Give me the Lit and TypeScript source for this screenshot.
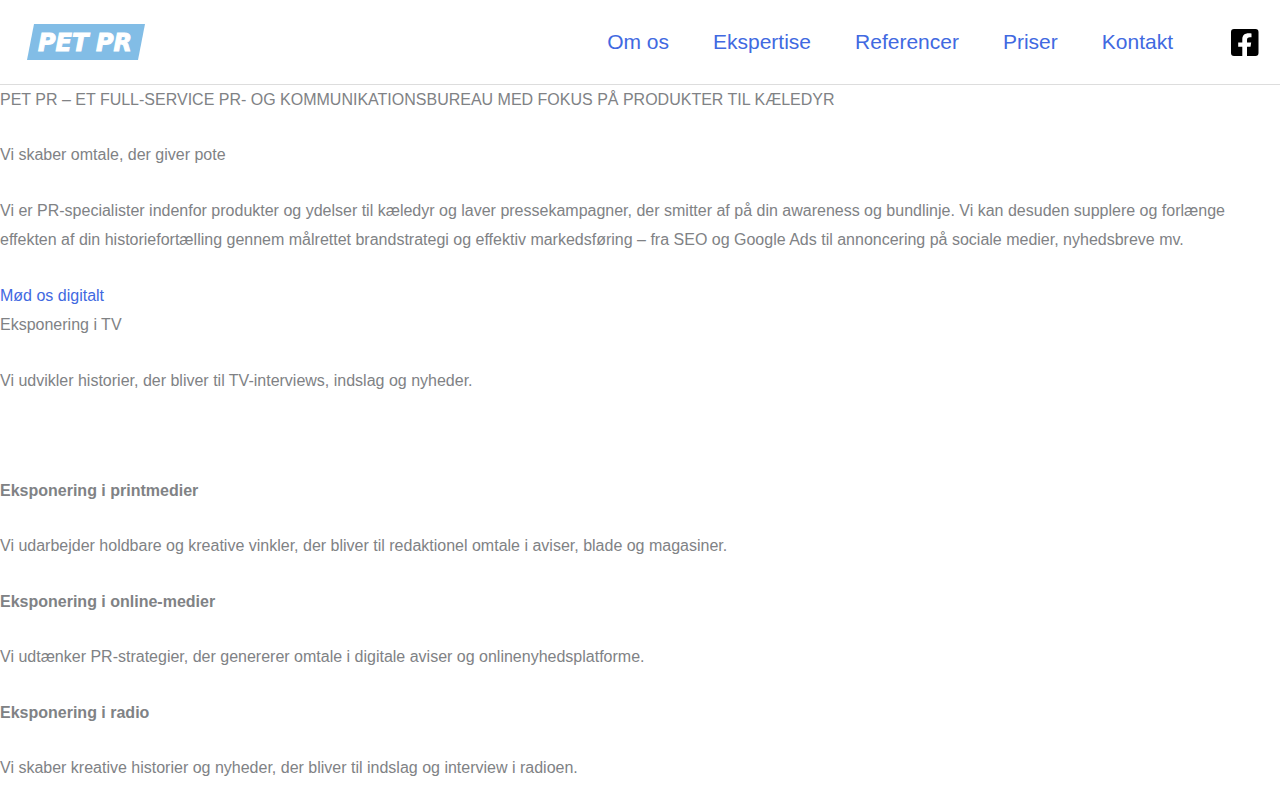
import { LitElement, html, css } from "lit";
import { customElement } from "lit/decorators.js";

const links = ["Om os", "Ekspertise", "Referencer", "Priser", "Kontakt"];

const media = [
  {
    title: "Eksponering i printmedier",
    text: "Vi udarbejder holdbare og kreative vinkler, der bliver til redaktionel omtale i aviser, blade og magasiner.",
  },
  {
    title: "Eksponering i online-medier",
    text: "Vi udtænker PR-strategier, der genererer omtale i digitale aviser og onlinenyhedsplatforme.",
  },
  {
    title: "Eksponering i radio",
    text: "Vi skaber kreative historier og nyheder, der bliver til indslag og interview i radioen.",
  },
];

@customElement("site-header")
export class SiteHeader extends LitElement {
  static styles = css`
    :host {
      display: block;
      border-bottom: 1px solid #dddddd;
    }
    .bar {
      display: flex;
      align-items: center;
      justify-content: space-between;
      min-height: 84px;
      padding: 0 20px;
    }
    .logo {
      display: block;
    }
    .logo svg,
    .social svg {
      display: block;
    }
    .word {
      font: italic bold 24px "DejaVu Sans", sans-serif;
      fill: #ffffff;
      stroke: #ffffff;
      stroke-width: 1;
    }
    .right {
      display: flex;
      align-items: center;
      gap: 57px;
    }
    .nav {
      display: flex;
      gap: 44px;
    }
    .nav a {
      color: #4169e1;
      font-size: 21px;
      line-height: 40px;
      text-decoration: none;
      white-space: nowrap;
    }
  `;

  render() {
    return html`
      <header class="bar">
        <a class="logo" href="#" aria-label="PET PR">
          <svg width="132" height="52" viewBox="0 0 132 52">
            <path d="M14 8H125L118 44H7Z" fill="#82bde6" />
            <text class="word" x="18" y="35">PET <tspan x="76">PR</tspan></text>
          </svg>
        </a>
        <div class="right">
          <nav class="nav">
            ${links.map((label) => html`<a href="#">${label}</a>`)}
          </nav>
          <a class="social" href="#" aria-label="Facebook">
            <svg width="30" height="30" viewBox="0 0 30 30">
              <path
                d="M4 2H25.500Q28.500 2 28.500 5V26Q28.500 29 25.500 29H17V19.700H20.500L21.200 15.500H17V13C17 11 17.800 10.200 20 10.200H21.500V6.500C20.800 6.300 19.700 6.200 18.700 6.200C14.700 6.200 12.300 8.200 12.300 12.200V15.500H8.200V19.700H12.300V29H4Q1 29 1 26V5Q1 2 4 2Z"
              />
            </svg>
          </a>
        </div>
      </header>
    `;
  }
}

@customElement("app-root")
export class AppRoot extends LitElement {
  static styles = css`
    :host {
      display: block;
      background: #ffffff;
      color: #808285;
      font-family: "Liberation Sans", Arial, sans-serif;
      font-size: 16px;
      line-height: 29px;
    }
    p {
      margin: 0 0 27px;
    }
    .heading {
      margin-bottom: 26px;
    }
    .intro a {
      color: #4169e1;
      text-decoration: none;
    }
    .media {
      padding-top: 54px;
    }
  `;

  render() {
    return html`
      <site-header></site-header>
      <main>
        <section class="intro">
          <p class="heading">PET PR – ET FULL-SERVICE PR- OG KOMMUNIKATIONSBUREAU MED FOKUS PÅ PRODUKTER TIL KÆLEDYR</p>
          <p>Vi skaber omtale, der giver pote</p>
          <p>
            Vi er PR-specialister indenfor produkter og ydelser til kæledyr og laver pressekampagner,
            der smitter af på din awareness og bundlinje. Vi kan desuden supplere og forlænge effekten
            af din historiefortælling gennem målrettet brandstrategi og effektiv markedsføring – fra
            SEO og Google Ads til annoncering på sociale medier, nyhedsbreve mv.
          </p>
          <a href="#">Mød os digitalt</a>
          <p>Eksponering i TV</p>
          <p>Vi udvikler historier, der bliver til TV-interviews, indslag og nyheder.</p>
        </section>
        <section class="media">
          ${media.map(
            ({ title, text }) => html`
              <p class="heading"><strong>${title}</strong></p>
              <p>${text}</p>
            `,
          )}
        </section>
      </main>
    `;
  }
}
